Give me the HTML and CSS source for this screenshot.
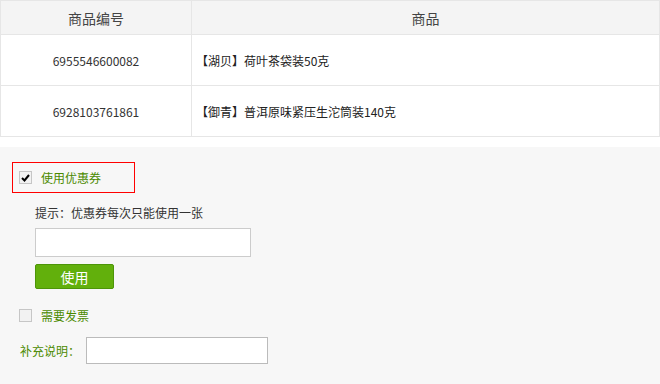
FILE: index.html
```html
<!DOCTYPE html>
<html lang="zh-CN">
<head>
    <meta charset="UTF-8">
    <title>确认订单</title>
    <link rel="stylesheet" href="styles.css">
</head>
<body>
    <table class="goods">
        <thead>
            <tr>
                <th class="col-code">商品编号</th>
                <th>商品</th>
            </tr>
        </thead>
        <tbody>
            <tr>
                <td class="col-code">6955546600082</td>
                <td class="name">【湖贝】荷叶茶袋装50克</td>
            </tr>
            <tr>
                <td class="col-code">6928103761861</td>
                <td class="name">【御青】普洱原味紧压生沱筒装140克</td>
            </tr>
        </tbody>
    </table>

    <div class="extra">
        <div class="coupon-box">
            <span class="check checked">
                <svg width="9" height="8" viewBox="0 0 9 8"><path d="M1 4 L3.5 6.5 L8 1" fill="none" stroke="#000" stroke-width="2"/></svg>
            </span>
            <span class="green">使用优惠券</span>
        </div>
        <div class="coupon-form">
            <p class="tip">提示：优惠券每次只能使用一张</p>
            <input type="text" class="coupon-input">
            <button class="btn-use">使用</button>
        </div>
        <div class="invoice">
            <span class="check"></span>
            <span class="green">需要发票</span>
        </div>
        <div class="remark">
            <label class="green" for="remark">补充说明：</label>
            <input type="text" id="remark" class="remark-input">
        </div>
    </div>
</body>
</html>
```

FILE: styles.css
```css
body {
    margin: 0;
    font-family: "Noto Sans CJK SC", "Liberation Sans", sans-serif;
    font-size: 12px;
    color: #333;
    background: #fff;
}
.goods {
    width: 660px;
    border-collapse: collapse;
}
.goods th, .goods td {
    border: 1px solid #e6e6e6;
    padding: 0;
}
.goods th {
    height: 33px;
    background: #f4f4f4;
    font-size: 14px;
    font-weight: normal;
    color: #444;
}
.goods td {
    height: 50px;
}
.goods .col-code {
    width: 190px;
    text-align: center;
}
.goods td.name {
    padding-left: 4px;
    color: #222;
}
.extra {
    margin-top: 10px;
    background: #f7f7f7;
    padding: 15px 0 20px 0;
}
.coupon-box {
    margin-left: 12px;
    width: 121px;
    height: 29px;
    border: 1px solid #f00;
    display: flex;
    align-items: center;
    box-sizing: content-box;
}
.check {
    width: 11px;
    height: 11px;
    border: 1px solid #c6c6c6;
    background: #f2f2f2;
    display: flex;
    align-items: center;
    justify-content: center;
}
.coupon-box .check {
    margin-left: 6px;
    margin-right: 9px;
}
.green {
    color: #4b8a00;
    font-size: 12px;
}
.coupon-form {
    padding-left: 35px;
}
.tip {
    margin: 11px 0 0 0;
    line-height: 18px;
}
.coupon-input {
    display: block;
    width: 216px;
    height: 29px;
    margin-top: 6px;
    border: 1px solid #ccc;
    background: #fff;
    box-sizing: border-box;
}
.btn-use {
    display: block;
    margin-top: 7px;
    width: 79px;
    height: 25px;
    background: #62b00c;
    border: 1px solid #4d9508;
    border-radius: 2px;
    color: #fff;
    font-family: inherit;
    font-size: 14px;
    padding: 0;
}
.invoice {
    margin-top: 18px;
    padding-left: 19px;
    display: flex;
    align-items: center;
}
.invoice .check {
    margin-right: 9px;
}
.remark {
    margin-top: 13px;
    padding-left: 20px;
    display: flex;
    align-items: center;
}
.remark-input {
    margin-left: 6px;
    width: 182px;
    height: 27px;
    border: 1px solid #bbb;
    background: #fff;
    box-sizing: border-box;
}
```
